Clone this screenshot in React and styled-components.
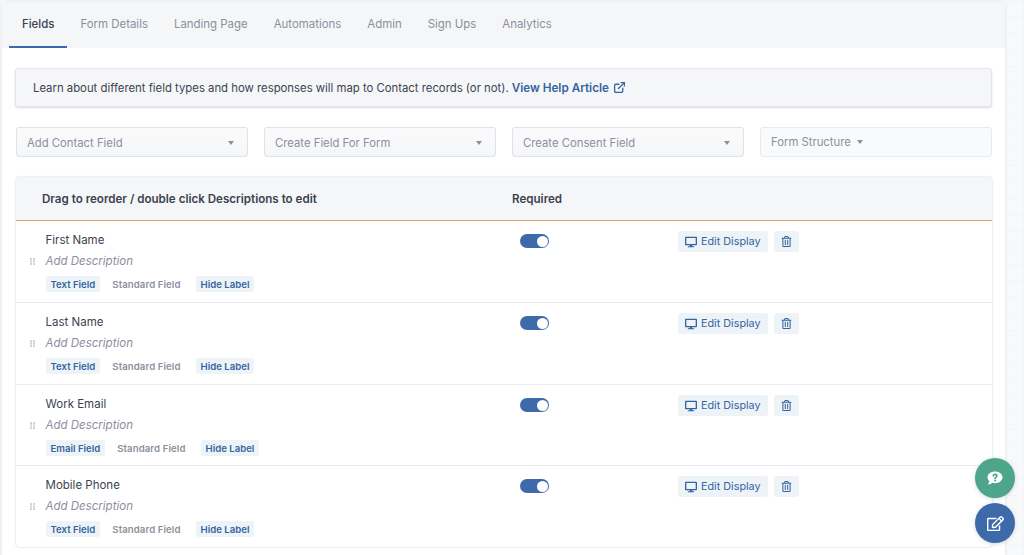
import React from 'react';
import styled, { createGlobalStyle } from 'styled-components';
import { FaDesktop, FaRegTrashAlt, FaRegEdit } from 'react-icons/fa';
import { FiExternalLink } from 'react-icons/fi';

const Global = createGlobalStyle`
  html, body { margin: 0; padding: 0; height: 555px; overflow: hidden; background: #f8f9fa; }
  body { font-family: Inter, "Liberation Sans", sans-serif; -webkit-font-smoothing: antialiased; }
  * { box-sizing: border-box; }
`;

const Page = styled.div`
  width: 1024px; height: 555px; padding: 2px 19px 0 2px; overflow: hidden; position: relative;
  background-image: linear-gradient(#f4f5f6 1px, transparent 1px), linear-gradient(90deg, #f4f5f6 1px, transparent 1px);
  background-size: 16.5px 16.5px;
`;
const Card = styled.div`
  background: #fff; border-radius: 4px 4px 0 0; box-shadow: 0 0 2px rgba(60,70,90,.22); height: 600px;
`;
const Tabs = styled.nav`
  display: flex; height: 46px; padding-left: 7px; background: #f5f6f8; border-radius: 4px 4px 0 0;
`;
const Tab = styled.div`
  height: 46px; padding: 14px 13px 0; font-size: 11.43px; line-height: 16px; white-space: nowrap;
  color: ${p => (p.$active ? '#3c4250' : '#8b909c')};
  border-bottom: 2px solid ${p => (p.$active ? '#3f6aa9' : 'transparent')};
  ${p => p.$active && 'font-weight: 500;'}
`;
const Body = styled.div`
  padding: 20px 13px 0 13px;
`;
const Notice = styled.div`
  height: 39px; width: 977px; padding: 0 17px; display: flex; align-items: center; gap: 3px;
  background: #f5f6f8; border: 1px solid #e3e5ea; border-radius: 3px; box-shadow: 0 1px 2px rgba(60,70,90,.2);
  font-size: 11.33px; color: #3c4250; white-space: nowrap;
`;
const HelpLink = styled.a`
  display: inline-flex; align-items: center; gap: 4px; color: #35659f; font-weight: 600; font-size: 11.7px;
  svg { stroke-width: 2.4; }
`;
const Controls = styled.div`
  display: grid; grid-template-columns: repeat(4, 232px); column-gap: 16px; margin: 20px 0 0 1px;
`;
const Select = styled.div`
  height: 30px; padding: 1px 10px 0; display: flex; align-items: center; justify-content: space-between;
  background: linear-gradient(#fbfbfc, #f5f6f8); border: 1px solid #dfe2e8; border-radius: 3px;
  font-size: 11.3px; color: #8b909c; white-space: nowrap;
`;
const StructureSelect = styled(Select)`
  justify-content: flex-start; gap: 6px; background: #f9fafb; border-color: #e8eaee; padding-top: 0; padding-bottom: 1px;
`;
const Caret = styled.span`
  width: 0; height: 0; border-left: 3.5px solid transparent; border-right: 3.5px solid transparent;
  border-top: 4px solid #8b909c; margin-right: ${p => (p.$flush ? 0 : 3)}px;
`;
const Table = styled.section`
  width: 976px; margin: 20px 0 0 1px; border-radius: 4px; background: #fff; box-shadow: 0 0 2px rgba(60,70,90,.3);
`;
const TableHead = styled.header`
  display: grid; grid-template-columns: 497px 1fr; align-items: center; height: 44px; padding-left: 26px;
  background: #f5f6f8; border-bottom: 1px solid #f39a5f; border-radius: 4px 4px 0 0;
  font-size: 11.6px; font-weight: 600; color: #3c4250; white-space: nowrap;
`;
const HeadCell = styled.div`
  &:last-child { margin-left: -27px; }
`;
const Row = styled.article`
  display: grid; grid-template-columns: 29.5px 474.5px 158px 1fr; height: ${p => p.$h}px; border-bottom: 1px solid #e9ebef;
  &:last-child { border-bottom: 0; }
`;
const Handle = styled.div`
  display: flex; align-items: center; justify-content: flex-end; padding: 0 11px 0 0;
`;
const Info = styled.div`
  padding-top: 12px;
`;
const FieldName = styled.div`
  font-size: 11.5px; line-height: 14px; color: #3c4250;
`;
const Description = styled.div`
  margin-top: 7px; font-size: 11.5px; line-height: 14px; font-style: italic; color: #8b909c;
`;
const Tags = styled.div`
  display: flex; gap: 5px; margin-top: 8px;
`;
const Tag = styled.span`
  height: 16px; display: inline-flex; align-items: center; border-radius: 3px; white-space: nowrap;
  font-size: 9.6px; font-weight: 600;
  padding: ${p => (p.$muted ? '0 10px 0 7px' : '0 5px')};
  letter-spacing: ${p => (p.$muted ? '.1px' : '0')};
  color: ${p => (p.$muted ? '#8b909c' : '#35659f')};
  background: ${p => (p.$muted ? 'transparent' : '#eef3f8')};
`;
const ToggleCell = styled.div`
  padding-top: 13px;
`;
const Toggle = styled.div`
  position: relative; width: 29px; height: 14px; border-radius: 7px; background: #3f6aa9;
  &::after { content: ''; position: absolute; right: 1.5px; top: 1.5px; width: 11px; height: 11px; border-radius: 50%; background: #fff; }
`;
const Actions = styled.div`
  display: flex; gap: 6px; padding-top: 10px; align-items: flex-start;
`;
const ActionButton = styled.button`
  height: 21px; padding: 0 7px; display: inline-flex; align-items: center; gap: 4px; border: 0; border-radius: 3px;
  background: #eef3f8; color: #35659f; font: 400 10.8px Inter, sans-serif; white-space: nowrap;
`;
const Fab = styled.button`
  position: absolute; left: 975px; top: ${p => p.$top}px; width: 40px; height: 40px; border: 0; border-radius: 50%;
  display: flex; align-items: center; justify-content: center; color: #fff;
  background: ${p => p.$bg}; box-shadow: 0 1px 4px rgba(40,50,70,.18);
`;

const Dots = () => (
  <svg width="5" height="7" viewBox="0 0 5 7" fill="#cfd2d8">
    {[0, 2.5, 5].flatMap(y => [0, 3].map(x => <rect key={`${x}-${y}`} x={x} y={y} width="2" height="2" />))}
  </svg>
);
const QuestionBubble = () => (
  <svg width="16" height="15" viewBox="0 0 16 15">
    <path fill="#fff" d="M8 .5C3.800 .5 .5 3 .5 6.300c0 1.500.7 2.800 1.800 3.800-.2 1.400-1 2.600-1.600 3.400 1.900-.1 3.500-.8 4.600-1.700.8.2 1.700.4 2.700.4 4.200 0 7.500-2.600 7.500-5.900S12.200 .5 8 .5z" />
    <path fill="none" stroke="#4da58a" strokeWidth="1.600" strokeLinecap="round" d="M6.200 4.900c.1-1 1-1.500 1.900-1.500 1 0 1.800.6 1.800 1.500 0 1.300-1.800 1.300-1.800 2.500" />
    <circle cx="8.100" cy="9.400" r="1" fill="#4da58a" />
  </svg>
);

const rows = [
  { name: 'First Name', type: 'Text Field', h: 82 },
  { name: 'Last Name', type: 'Text Field', h: 82 },
  { name: 'Work Email', type: 'Email Field', h: 81 },
  { name: 'Mobile Phone', type: 'Text Field', h: 81 },
];
const tabs = ['Fields', 'Form Details', 'Landing Page', 'Automations', 'Admin', 'Sign Ups', 'Analytics'];

export default function App() {
  return (
    <Page>
      <Global />
      <Card>
        <Tabs>
          {tabs.map((t, i) => <Tab key={t} $active={i === 0}>{t}</Tab>)}
        </Tabs>
        <Body>
          <Notice>
            Learn about different field types and how responses will map to Contact records (or not).
            <HelpLink>View Help Article <FiExternalLink size={13} /></HelpLink>
          </Notice>
          <Controls>
            <Select>Add Contact Field<Caret /></Select>
            <Select>Create Field For Form<Caret /></Select>
            <Select>Create Consent Field<Caret /></Select>
            <StructureSelect>Form Structure<Caret $flush /></StructureSelect>
          </Controls>
          <Table>
            <TableHead>
              <HeadCell>Drag to reorder / double click Descriptions to edit</HeadCell>
              <HeadCell>Required</HeadCell>
            </TableHead>
            {rows.map(r => (
              <Row key={r.name} $h={r.h}>
                <Handle><Dots /></Handle>
                <Info>
                  <FieldName>{r.name}</FieldName>
                  <Description>Add Description</Description>
                  <Tags>
                    <Tag>{r.type}</Tag>
                    <Tag $muted>Standard Field</Tag>
                    <Tag>Hide Label</Tag>
                  </Tags>
                </Info>
                <ToggleCell><Toggle /></ToggleCell>
                <Actions>
                  <ActionButton><FaDesktop size={12} />Edit Display</ActionButton>
                  <ActionButton><FaRegTrashAlt size={11} /></ActionButton>
                </Actions>
              </Row>
            ))}
          </Table>
        </Body>
      </Card>
      <Fab $top={458} $bg="#4da58a"><QuestionBubble /></Fab>
      <Fab $top={503} $bg="#3f6aa9"><FaRegEdit size={17} /></Fab>
    </Page>
  );
}
